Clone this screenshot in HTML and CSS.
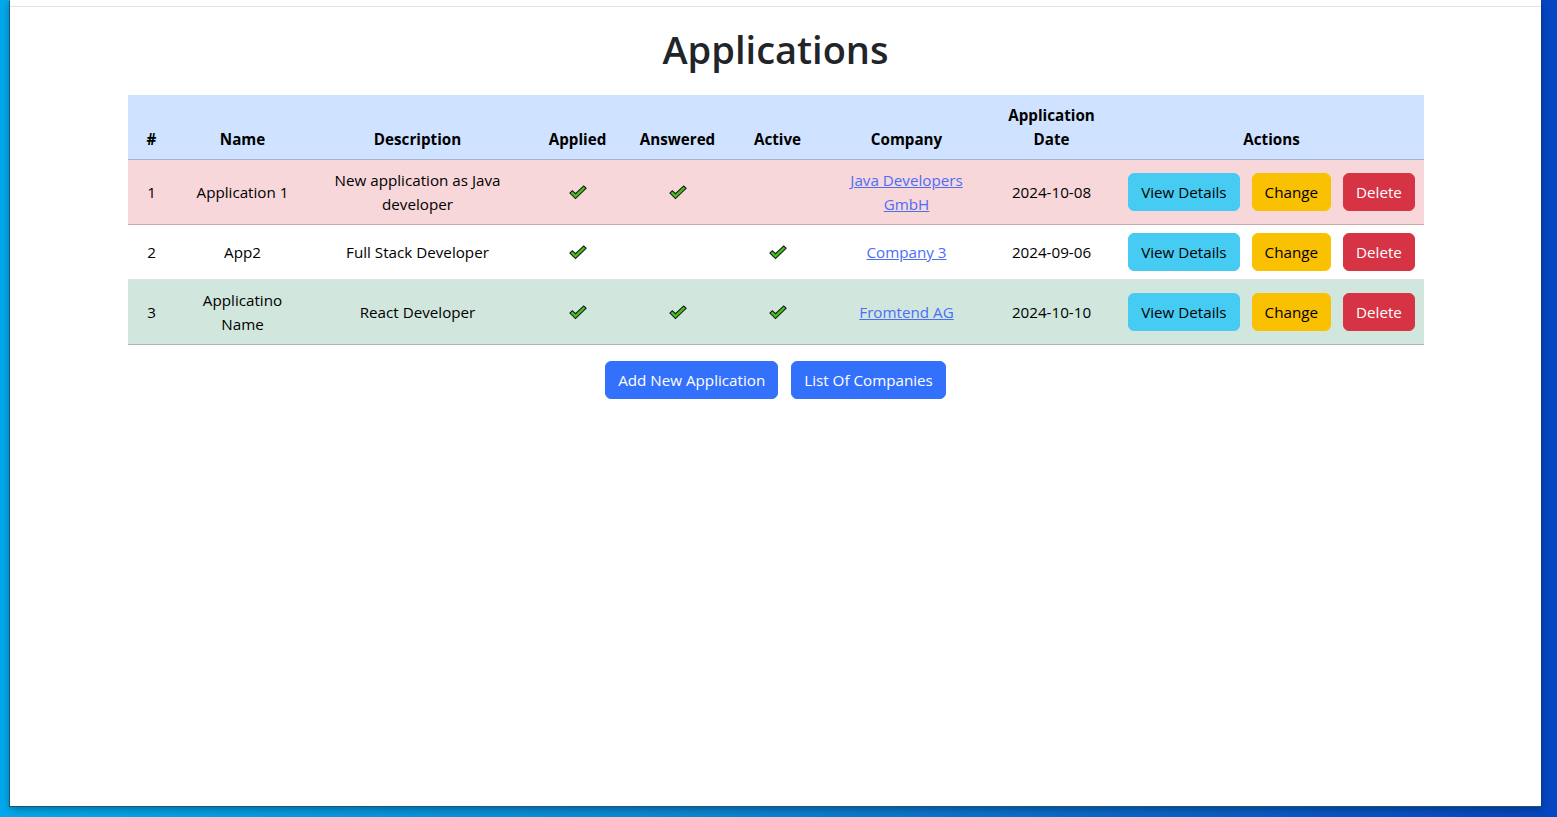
FILE: index.html
```html
<!DOCTYPE html>
<html lang="en">
<head>
<meta charset="utf-8">
<title>Applications</title>
<link rel="stylesheet" href="styles.css">
</head>
<body>
<div class="desktop">
  <div class="window">
    <div class="topbar"></div>
    <main class="container">
      <h1 class="title">Applications</h1>
      <table class="apps">
        <colgroup>
          <col style="width:48px"><col style="width:134px"><col style="width:216px"><col style="width:104px"><col style="width:96px"><col style="width:104px"><col style="width:154px"><col style="width:136px"><col style="width:304px">
        </colgroup>
        <thead>
          <tr class="row-primary">
            <th>#</th><th>Name</th><th>Description</th><th>Applied</th><th>Answered</th><th>Active</th><th>Company</th><th>Application Date</th><th>Actions</th>
          </tr>
        </thead>
        <tbody>
          <tr class="row-danger">
            <td>1</td>
            <td>Application 1</td>
            <td>New application as Java developer</td>
            <td><svg class="check" viewBox="0 0 18 15" width="18" height="15"><path d="M0.9 8.1 L3.3 5.7 L6.5 8.7 L14.7 0.9 L17.1 3.3 L6.5 13.6 Z"/></svg></td>
            <td><svg class="check" viewBox="0 0 18 15" width="18" height="15"><path d="M0.9 8.1 L3.3 5.7 L6.5 8.7 L14.7 0.9 L17.1 3.3 L6.5 13.6 Z"/></svg></td>
            <td></td>
            <td><a href="#" class="link">Java Developers GmbH</a></td>
            <td>2024-10-08</td>
            <td><div class="actions"><a href="#" class="btn btn-info">View Details</a><a href="#" class="btn btn-warning">Change</a><a href="#" class="btn btn-danger">Delete</a></div></td>
          </tr>
          <tr class="row-plain">
            <td>2</td>
            <td>App2</td>
            <td>Full Stack Developer</td>
            <td><svg class="check" viewBox="0 0 18 15" width="18" height="15"><path d="M0.9 8.1 L3.3 5.7 L6.5 8.7 L14.7 0.9 L17.1 3.3 L6.5 13.6 Z"/></svg></td>
            <td></td>
            <td><svg class="check" viewBox="0 0 18 15" width="18" height="15"><path d="M0.9 8.1 L3.3 5.7 L6.5 8.7 L14.7 0.9 L17.1 3.3 L6.5 13.6 Z"/></svg></td>
            <td><a href="#" class="link">Company 3</a></td>
            <td>2024-09-06</td>
            <td><div class="actions"><a href="#" class="btn btn-info">View Details</a><a href="#" class="btn btn-warning">Change</a><a href="#" class="btn btn-danger">Delete</a></div></td>
          </tr>
          <tr class="row-success">
            <td>3</td>
            <td>Applicatino Name</td>
            <td>React Developer</td>
            <td><svg class="check" viewBox="0 0 18 15" width="18" height="15"><path d="M0.9 8.1 L3.3 5.7 L6.5 8.7 L14.7 0.9 L17.1 3.3 L6.5 13.6 Z"/></svg></td>
            <td><svg class="check" viewBox="0 0 18 15" width="18" height="15"><path d="M0.9 8.1 L3.3 5.7 L6.5 8.7 L14.7 0.9 L17.1 3.3 L6.5 13.6 Z"/></svg></td>
            <td><svg class="check" viewBox="0 0 18 15" width="18" height="15"><path d="M0.9 8.1 L3.3 5.7 L6.5 8.7 L14.7 0.9 L17.1 3.3 L6.5 13.6 Z"/></svg></td>
            <td><a href="#" class="link">Fromtend AG</a></td>
            <td>2024-10-10</td>
            <td><div class="actions"><a href="#" class="btn btn-info">View Details</a><a href="#" class="btn btn-warning">Change</a><a href="#" class="btn btn-danger">Delete</a></div></td>
          </tr>
        </tbody>
      </table>
      <div class="bottom-actions">
        <a href="#" class="btn btn-primary">Add New Application</a>
        <a href="#" class="btn btn-primary">List Of Companies</a>
      </div>
    </main>
  </div>
</div>
</body>
</html>
```

FILE: styles.css
```css
* { box-sizing: border-box; }

html, body {
  margin: 0;
  padding: 0;
  height: 817px;
  overflow: hidden;
}

body {
  font-family: "Open Sans", "Noto Sans", "Liberation Sans", sans-serif;
  font-size: 15.2px;
  line-height: 24px;
  color: #212529;
  background: linear-gradient(90deg, #03a8ec 0%, #0a86d4 45%, #0a63c8 75%, #0545c2 100%);
}

.desktop {
  display: flex;
  height: 817px;
}

.window {
  width: 1531px;
  height: 806px;
  margin-left: 10px;
  background: #ffffff;
  box-shadow: -1px 1px 0 #14587a, 0 3px 8px rgba(0, 0, 0, 0.35);
  display: flex;
  flex-direction: column;
}

.topbar {
  height: 7px;
  border-bottom: 1px solid #e2e2e2;
  flex: none;
}

.container {
  width: 1296px;
  margin: 0 auto;
}

.title {
  margin: 18px 0 22px;
  font-size: 38px;
  line-height: 48px;
  font-weight: 600;
  text-align: center;
  color: #212529;
}

.apps {
  width: 1296px;
  table-layout: fixed;
  border-collapse: collapse;
  color: #000;
}

.apps th,
.apps td {
  padding: 8px;
  text-align: center;
  vertical-align: middle;
  border-bottom: 1px solid #dee2e6;
}

.apps th {
  font-weight: 700;
  vertical-align: bottom;
}

.row-primary th {
  background: #cfe2ff;
  border-bottom-color: #a6b5cc;
}

.row-danger td {
  background: #f8d7da;
  border-bottom-color: #c6acae;
}

.row-success td {
  background: #d1e7dd;
  border-bottom-color: #a8b9b1;
}

.row-plain td {
  background: #ffffff;
}

.check {
  display: block;
  margin: 0 auto;
}

.check path {
  fill: #45c21b;
  stroke: #141414;
  stroke-width: 1.1;
  stroke-linejoin: miter;
}

.link {
  color: #4c6ef7;
  text-decoration: underline;
}

.actions {
  display: flex;
  justify-content: center;
  gap: 12px;
}

.btn {
  display: inline-block;
  padding: 6px 12px;
  border: 1px solid transparent;
  border-radius: 6px;
  font-size: 15.2px;
  line-height: 24px;
  text-decoration: none;
  white-space: nowrap;
}

.btn-info {
  background: #46cbf2;
  border-color: #46cbf2;
  color: #000;
}

.btn-warning {
  background: #fac102;
  border-color: #fac102;
  color: #000;
}

.btn-danger {
  background: #d63344;
  border-color: #d63344;
  color: #fff;
}

.btn-primary {
  background: #3371fd;
  border-color: #3371fd;
  color: #fff;
}

.bottom-actions {
  display: flex;
  justify-content: center;
  gap: 13px;
  margin-top: 16px;
}
```
